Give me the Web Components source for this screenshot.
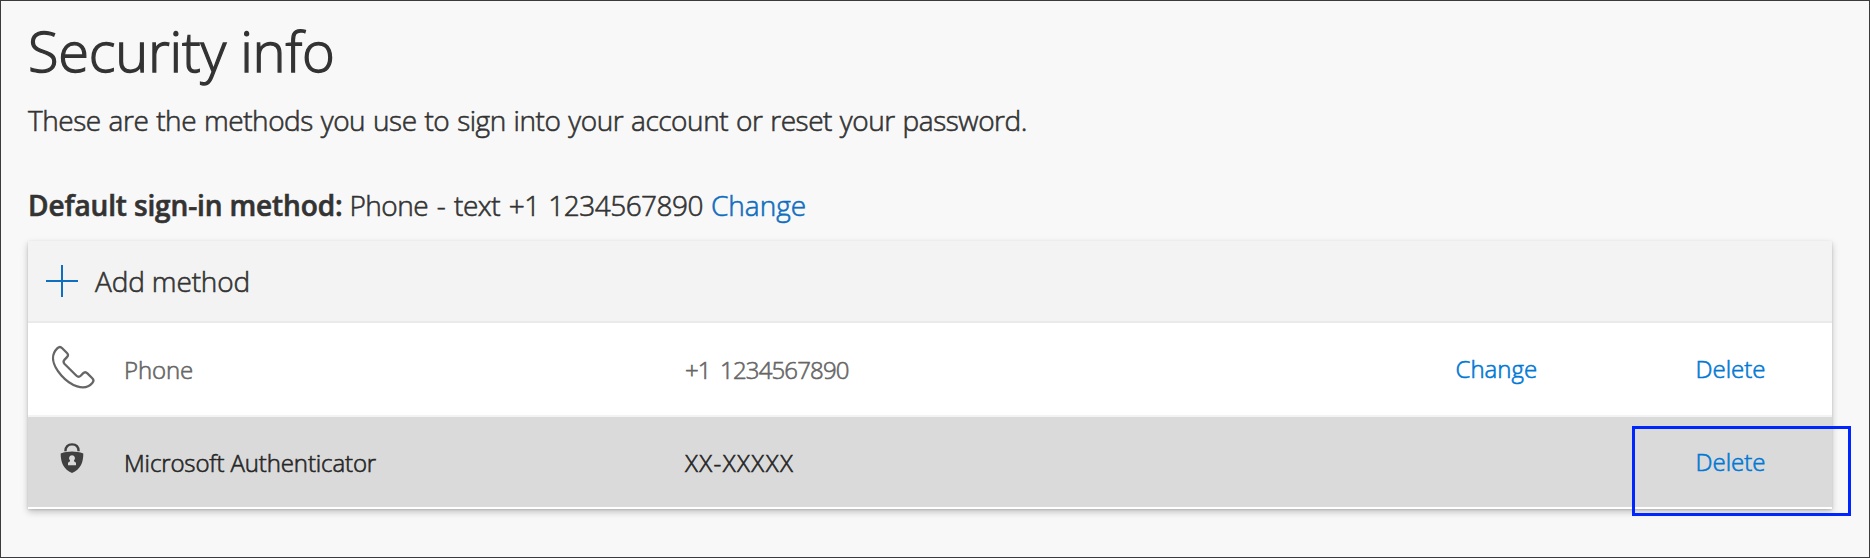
<!DOCTYPE html>
<html lang="en">
<head>
<meta charset="utf-8">
<title>Security info</title>
<style>
html, body { margin: 0; height: 100%; }
body { background: #f8f8f8; color: #333; font-family: "Open Sans", "Noto Sans", sans-serif; font-weight: 300; }
</style>
</head>
<body>
<security-page>
  <default-method label="Default sign-in method:" value="Phone - text +1 1234567890" action="Change"></default-method>
  <method-list>
    <method-row name="Phone" value="+1 1234567890" changeable>
      <phone-icon slot="icon"></phone-icon>
    </method-row>
    <method-row class="selected" name="Microsoft Authenticator" value="XX-XXXXX" highlighted>
      <lock-icon slot="icon"></lock-icon>
    </method-row>
  </method-list>
</security-page>
<script>
const define = (name, render) => customElements.define(name, class extends HTMLElement {
  constructor() { super(); this.attachShadow({ mode: 'open' }); }
  connectedCallback() { this.shadowRoot.innerHTML = render(this); }
});

define('security-page', () => `
<style>
:host { display: block; box-sizing: border-box; height: 100vh; border: 1px solid #3b3a3c; padding: 17px 37px 0 27px; overflow: hidden; background: #f8f8f8; -webkit-text-stroke: .6px currentColor; }
h1 { margin: 0; font-size: 56px; line-height: 64px; font-weight: 300; letter-spacing: -.245px; -webkit-text-stroke-width: 1.3px; }
p { margin: 18px 0 45px; font-size: 28px; line-height: 40px; letter-spacing: -.45px; word-spacing: 1px; }
</style>
<h1>Security info</h1>
<p>These are the methods you use to sign into your account or reset your password.</p>
<slot></slot>`);

define('default-method', el => `
<style>
:host { display: flex; font-size: 28px; line-height: 40px; margin-bottom: 16px; white-space: nowrap; }
b { font-weight: 600; letter-spacing: -.13px; margin-right: 7px; }
span { letter-spacing: -.53px; word-spacing: 2px; margin-right: 8px; }
a { color: #106ebe; }
</style>
<b>${el.getAttribute('label')}</b><span>${el.getAttribute('value')}</span><a>${el.getAttribute('action')}</a>`);

define('method-list', () => `
<style>
:host { display: block; background: #fff; box-shadow: 0 3px 7px rgba(0,0,0,.22), 0 1px 2px rgba(0,0,0,.13); padding-bottom: 2px; }
header { display: flex; align-items: center; height: 80px; padding-left: 18px; gap: 17px; background: #f3f3f3; border-bottom: 2px solid #eaeaea; font-size: 28px; line-height: 40px; letter-spacing: -.15px; }
svg { display: block; }
</style>
<header><svg width="32" height="32" viewBox="0 0 32 32" fill="#106ebe"><path d="M15 0h2v15h15v2H17v15h-2V17H0v-2h15z"/></svg><span>Add method</span></header>
<slot></slot>`);

define('phone-icon', () => `
<style>:host { display: block; margin: -5px 0 0 23px; } svg { display: block; }</style>
<svg width="44" height="44" viewBox="0 0 44 44" fill="none" stroke="#666" stroke-width="2.3" stroke-linejoin="round"><path d="M6.5 3.2C8 1.8 9.8 1.8 11.2 3.2L16 8C17.3 9.3 17.2 10.8 16 12.1L13.6 14.6C12.3 16 12.3 17.6 13.6 19L25.5 30.7C26.8 32 28.4 32 29.7 30.7L32 28.4C33.4 27 35 27 36.4 28.4L41.3 33.2C42.7 34.6 42.7 36.5 41.3 38C33.5 47.3 19 40.3 10.4 30.5C1.3 20.2-.8 10.2 6.5 3.2Z"/></svg>`);

define('lock-icon', () => `
<style>:host { display: block; margin: -9px 0 0 32px; } svg { display: block; }</style>
<svg width="24" height="30" viewBox="0 0 24 30"><path d="M5.4 8.2C5.4 3.5 8 1.4 12 1.4s6.6 2.1 6.6 6.8" fill="none" stroke="#404040" stroke-width="2.4"/><path fill="#404040" d="M12 8.5C15.8 8.5 19.8 9.2 23.3 10.4C23.4 19.5 20.5 26 12 30C3.5 26 .6 19.5 .7 10.4C4.2 9.2 8.2 8.5 12 8.5Z"/><path fill="#dadada" d="M12 12.2a3 3 0 0 1 2 5.2v.9l2 1.4v2.6H8v-2.6l2-1.4v-.9a3 3 0 0 1 2-5.2Z"/></svg>`);

define('method-row', el => `
<style>
:host { display: grid; grid-template-columns: 96px 560px 770px 240px 1fr; align-items: center; height: 92px; background: #fff; color: #666; font-size: 24px; line-height: 34px; border-bottom: 2px solid #f3f3f3; white-space: nowrap; }
:host(.selected) { height: 90px; background: #dadada; color: #262626; border: 0; }
.name, .value { padding-top: 1px; }
.name { letter-spacing: -.12px; }
.value { letter-spacing: -.85px; word-spacing: 4px; padding-left: 1px; }
:host(.selected) .value { letter-spacing: 1.4px; }
a { color: #0078d4; }
.cell { position: relative; align-self: stretch; display: flex; align-items: center; padding-left: 1.5px; }
.mark { position: absolute; left: -62px; top: 9px; width: 213px; height: 84px; border: 3px solid #0026ff; }
</style>
<slot name="icon"></slot>
<span class="name">${el.getAttribute('name')}</span>
<span class="value">${el.getAttribute('value')}</span>
<div class="cell">${el.hasAttribute('changeable') ? '<a>Change</a>' : ''}</div>
<div class="cell"><a>Delete</a>${el.hasAttribute('highlighted') ? '<div class="mark"></div>' : ''}</div>`);
</script>
</body>
</html>
